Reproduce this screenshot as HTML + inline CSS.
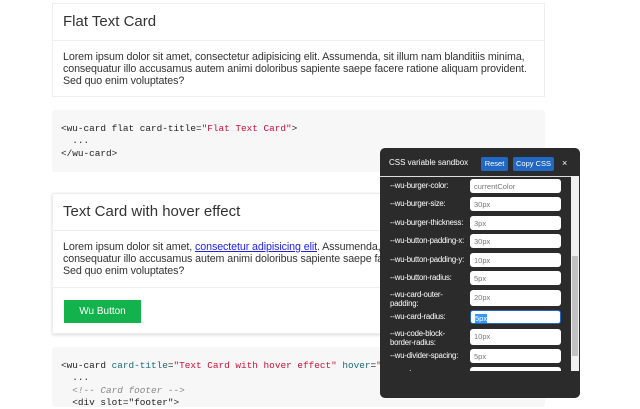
<!DOCTYPE html>
<html><head><style>
*{box-sizing:border-box;margin:0;padding:0}
body{width:640px;height:400px;overflow:hidden;background:#fff;font-family:"Liberation Sans",sans-serif;position:relative}
.card{position:absolute;left:52px;width:493px;background:#fff;border:1px solid #eee}
.hd{height:37px;border-bottom:1px solid #eee;padding:9px 10px;font-size:15px;color:#333}
.bd{padding:10px 10px 8px;font-size:10.7px;line-height:12px;color:#333;letter-spacing:-0.1px;white-space:nowrap;overflow:hidden}
.code{position:absolute;left:52px;width:493px;background:#f7f7f7;border-radius:3px;font-family:"Liberation Mono",monospace;font-size:9.4px;line-height:12.3px;color:#222;padding:13px 9px;white-space:pre}
.s{color:#d0103a}.a{color:#1a6a78}.c{color:#888;font-style:italic}
.panel{position:absolute;left:380px;top:148px;width:200px;height:250px;background:#2b2b2b;border-radius:5px;font-size:8px;color:#fff}
.btn{position:absolute;top:9px;height:14px;background:#2168c4;border-radius:2px;color:#fff;font-size:7.5px;line-height:14px;text-align:center}
.list{position:absolute;left:0;top:28px;width:191px;height:195px;overflow:hidden;border-top:1px solid #ddd}
.row{position:absolute;left:10px;width:172px}
.row .l{position:absolute;left:0;width:78px;line-height:9px;font-size:7.8px;letter-spacing:-0.2px}
.row .i{position:absolute;left:80px;width:91px;height:14px;background:#fff;border-radius:3px;color:#777;font-size:7.5px;padding:3px 4px}
</style></head><body>
<div class="card" style="top:3px;height:94px"><div class="hd">Flat Text Card</div>
<div class="bd">Lorem ipsum dolor sit amet, consectetur adipisicing elit. Assumenda, sit illum nam blanditiis minima,<br>consequatur illo accusamus autem animi doloribus sapiente saepe facere ratione aliquam provident.<br>Sed quo enim voluptates?</div></div>
<div class="code" style="top:110px;height:62px">&lt;wu-card flat card-title=<span class="s">"Flat Text Card"</span>&gt;
  ...
&lt;/wu-card&gt;</div>
<div class="card" style="top:193px;height:141px;box-shadow:0 1px 3px rgba(0,0,0,.15)"><div class="hd">Text Card with hover effect</div>
<div class="bd" style="height:57px;border-bottom:1px solid #eee">Lorem ipsum dolor sit amet, <span style="color:#22e;text-decoration:underline">consectetur adipisicing elit</span>. Assumenda, sit illum nam blanditiis minima,<br>consequatur illo accusamus autem animi doloribus sapiente saepe facere ratione aliquam provident.<br>Sed quo enim voluptates?</div>
<div style="position:absolute;left:11px;top:106px;width:77px;height:23px;background:#12b24c;color:#fff;font-size:10px;line-height:23px;text-align:center">Wu Button</div></div>
<div class="code" style="top:347px;height:60px">&lt;wu-card <span class="a">card-title</span>=<span class="s">"Text Card with hover effect"</span> <span class="a">hover</span>=<span class="s">"hover"</span>&gt;
  ...
  <span class="c">&lt;!-- Card footer --&gt;</span>
  &lt;div slot="footer"&gt;</div>
<div class="panel">
<div style="position:absolute;left:9px;top:10px">CSS variable sandbox</div>
<div class="btn" style="left:101px;width:27px">Reset</div>
<div class="btn" style="left:133px;width:41px">Copy CSS</div>
<div style="position:absolute;left:182px;top:10px;font-size:9px">×</div>
<div class="list">
<div class="row" style="top:2px"><div class="l" style="top:2px">--wu-burger-color:</div><div class="i">currentColor</div></div>
<div class="row" style="top:20px"><div class="l" style="top:2px">--wu-burger-size:</div><div class="i">30px</div></div>
<div class="row" style="top:39px"><div class="l" style="top:2px">--wu-burger-thickness:</div><div class="i">3px</div></div>
<div class="row" style="top:57px"><div class="l" style="top:2px">--wu-button-padding-x:</div><div class="i">30px</div></div>
<div class="row" style="top:76px"><div class="l" style="top:2px">--wu-button-padding-y:</div><div class="i">10px</div></div>
<div class="row" style="top:94px"><div class="l" style="top:2px">--wu-button-radius:</div><div class="i">5px</div></div>
<div class="row" style="top:113px"><div class="l" style="top:0">--wu-card-outer-<br>padding:</div><div class="i" style="height:16px">20px</div></div>
<div class="row" style="top:133px"><div class="l" style="top:2px">--wu-card-radius:</div><div class="i" style="border:1px solid #2168c4"><span style="background:#39f;color:#fff">5px</span></div></div>
<div class="row" style="top:152px"><div class="l" style="top:0">--wu-code-block-<br>border-radius:</div><div class="i" style="height:16px">10px</div></div>
<div class="row" style="top:172px"><div class="l" style="top:2px">--wu-divider-spacing:</div><div class="i">5px</div></div>
<div class="row" style="top:190px"><div class="l" style="top:2px">--wu-drawer-menu</div><div class="i">&nbsp;</div></div>
</div>
<div style="position:absolute;left:191px;top:28px;width:8px;height:195px;background:#f0f0f0"><div style="position:absolute;left:1px;top:80px;width:6px;height:100px;background:#c1c1c1"></div></div>
</div>
</body></html>
